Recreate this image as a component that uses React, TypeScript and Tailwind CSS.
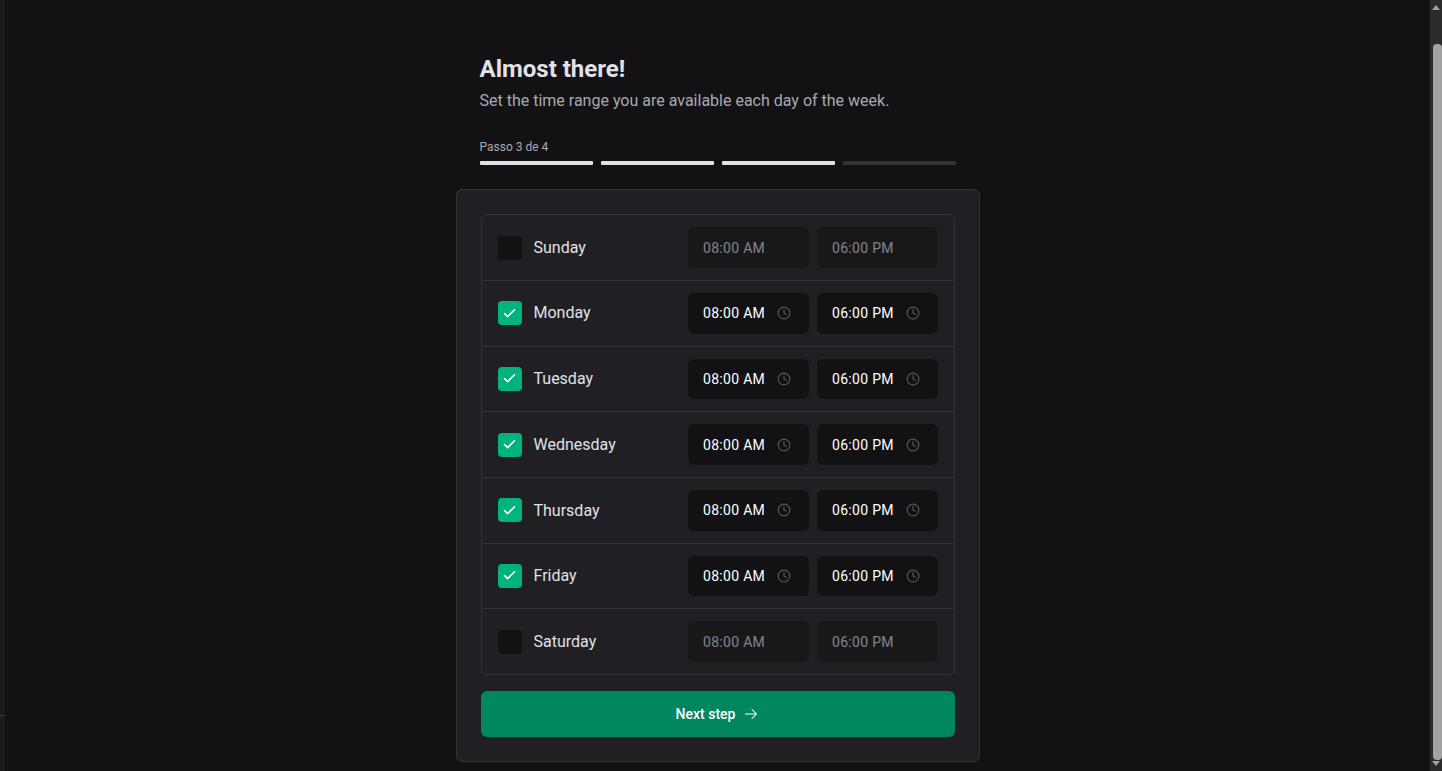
import { Check, Clock } from "lucide-react";
import { PiArrowRight } from "react-icons/pi";

const days = [
  { name: "Sunday", on: false },
  { name: "Monday", on: true },
  { name: "Tuesday", on: true },
  { name: "Wednesday", on: true },
  { name: "Thursday", on: true },
  { name: "Friday", on: true },
  { name: "Saturday", on: false },
];

function TimeBox({ value, on }: { value: string; on: boolean }) {
  return (
    <div
      className={`flex h-[40.7px] w-[121px] items-center rounded-md bg-[#121214] pl-[15.5px] text-sm ${
        on ? "text-white" : "opacity-50 text-[#e1e1e6]"
      }`}
    >
      <span className="w-[62px] whitespace-nowrap tracking-[0.3px]">{value}</span>
      {on && <Clock size={14} strokeWidth={2} className="ml-[12px] text-[#56565c]" />}
    </div>
  );
}

export default function App() {
  return (
    <div className="flex h-screen overflow-hidden bg-[#121214] font-['Roboto',sans-serif]">
      <div className="w-[5px] shrink-0 bg-[#1a1a1c] pt-[715px]">
        <div className="h-px bg-[#3c3c3e]" />
      </div>
      <main className="flex min-w-0 flex-1 justify-center pt-[53px]">
        <div className="w-[524px] shrink-0">
          <div className="px-6">
            <h1 className="text-2xl leading-[1.4] font-bold text-[#e1e1e6]">Almost there!</h1>
            <p className="mt-px text-base leading-[1.6] text-[#a9a9b2]">
              Set the time range you are available each day of the week.
            </p>
            <div className="mt-[24.8px]">
              <p className="text-xs leading-[1.6] text-[#a9a9b2]">Passo 3 de 4</p>
              <div className="mt-1 grid grid-cols-4 gap-2">
                <div className="h-1 rounded-[1px] bg-[#e1e1e6]" />
                <div className="h-1 rounded-[1px] bg-[#e1e1e6]" />
                <div className="h-1 rounded-[1px] bg-[#e1e1e6]" />
                <div className="h-1 rounded-[1px] bg-[#323238]" />
              </div>
            </div>
          </div>
          <section className="mt-6 rounded-md border border-[#323238] bg-[#202024] p-6">
            <div className="rounded-md border border-[#323238]">
              {days.map((d, i) => (
                <div
                  key={d.name}
                  className={`flex items-center justify-between px-4 py-3 ${
                    i > 0 ? "border-t border-[#323238]" : ""
                  }`}
                >
                  <div className="flex items-center gap-3">
                    <div
                      className={`flex h-6 w-6 items-center justify-center rounded ${
                        d.on ? "bg-[#00b37e]" : "bg-[#121214]"
                      }`}
                    >
                      {d.on && <Check size={15} strokeWidth={2.6} className="text-white" />}
                    </div>
                    <span className="text-base leading-[25.47px] text-[#e1e1e6]">{d.name}</span>
                  </div>
                  <div className="flex gap-2">
                    <TimeBox value="08:00 AM" on={d.on} />
                    <TimeBox value="06:00 PM" on={d.on} />
                  </div>
                </div>
              ))}
            </div>
            <button className="mt-4 flex h-[46px] w-full items-center justify-center gap-2 rounded-md bg-[#00875f] text-sm font-medium text-white">
              Next step
              <PiArrowRight size={16} />
            </button>
          </section>
        </div>
      </main>
      <div className="flex w-3 shrink-0 flex-col items-end bg-[#2b2b2b]">
        <div className="mx-auto mt-[5px] h-0 w-0 border-x-[4.5px] border-b-[5px] border-x-transparent border-b-[#a3a3a3]" />
        <div className="mt-[34px] h-[716px] w-[9px] rounded-t-[4px] rounded-b-[4px] bg-[#a3a3a3]" />
        <div className="mx-auto mt-[1px] h-0 w-0 border-x-[4.5px] border-t-[5px] border-x-transparent border-t-[#a3a3a3]" />
      </div>
    </div>
  );
}
